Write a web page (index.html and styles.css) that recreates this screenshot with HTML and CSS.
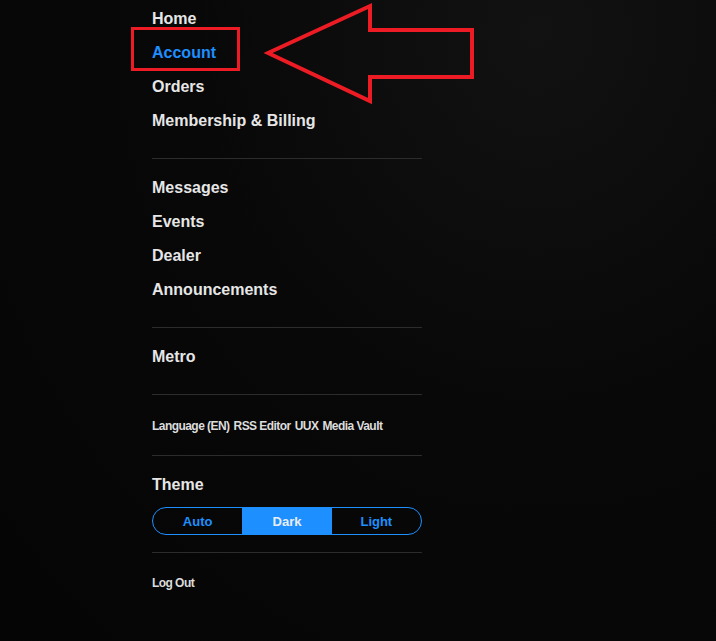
FILE: index.html
```html
<!DOCTYPE html>
<html lang="en">
<head>
    <meta charset="UTF-8">
    <meta name="viewport" content="width=device-width, initial-scale=1.0">
    <title>Account Menu</title>
    <link rel="stylesheet" href="styles.css">
</head>
<body>

    <nav class="menu">

        <div class="section first">
            <a class="item" href="#">Home</a>
            <a class="item active" href="#">Account</a>
            <a class="item" href="#">Orders</a>
            <a class="item" href="#">Membership &amp; Billing</a>
        </div>

        <div class="section">
            <a class="item" href="#">Messages</a>
            <a class="item" href="#">Events</a>
            <a class="item" href="#">Dealer</a>
            <a class="item" href="#">Announcements</a>
        </div>

        <div class="section">
            <a class="item" href="#">Metro</a>
        </div>

        <div class="section links">
            <a href="#">Language (EN)</a>
            <a href="#">RSS Editor</a>
            <a href="#">UUX</a>
            <a href="#">Media Vault</a>
        </div>

        <div class="section theme">
            <div class="item title">Theme</div>
            <div class="toggle">
                <button>Auto</button>
                <button class="on">Dark</button>
                <button>Light</button>
            </div>
        </div>

        <div class="section logout">
            <a href="#">Log Out</a>
        </div>

    </nav>

    <!-- annotation on top of the screenshot -->
    <div class="mark-box"></div>
    <svg class="mark-arrow" width="216" height="108" viewBox="0 0 216 108">
        <polygon points="4,51 106,4 106,28 208,28 208,75 106,75 106,99"
            fill="none" stroke="#ed1c24" stroke-width="4" stroke-linejoin="miter" />
    </svg>

</body>
</html>
```

FILE: styles.css
```css
body {
    margin: 0;
    height: 641px;
    overflow: hidden;
    background: radial-gradient(ellipse at 75% 5%, #121212 0%, #080808 45%, #050505 100%);
    color: #e6e6e6;
    font-family: "Liberation Sans", Arial, sans-serif;
}

.menu {
    width: 270px;
    margin-left: 152px;
    padding-top: 1px;
}

.section {
    display: flex;
    flex-direction: column;
    border-top: 1px solid #2c2c2c;
    padding: 11px 0 21px;
}

.section.first {
    border-top: none;
    padding-top: 0;
}

.item {
    display: block;
    height: 33px;
    padding-top: 1px;
    line-height: 34px;
    font-size: 16px;
    font-weight: bold;
    color: #e6e6e6;
    text-decoration: none;
}

.item.active {
    color: #1e8fff;
}

.links {
    flex-direction: row;
    gap: 4px;
    padding: 24px 0 22px;
}

.links a,
.logout a {
    font-size: 12px;
    line-height: 14px;
    font-weight: bold;
    letter-spacing: -0.55px;
    color: #dcdcdc;
    text-decoration: none;
}

.theme {
    padding-bottom: 17px;
}

.toggle {
    display: flex;
    height: 28px;
    margin-top: 6px;
    border: 1px solid #1e8fff;
    border-radius: 15px;
    overflow: hidden;
    box-sizing: border-box;
}

.toggle button {
    flex: 1;
    border: none;
    background: transparent;
    color: #1e8fff;
    font-family: "Liberation Sans", Arial, sans-serif;
    font-size: 13px;
    font-weight: bold;
    cursor: pointer;
}

.toggle button.on {
    background: #1e8fff;
    color: #e8eef5;
}

.logout {
    padding: 23px 0 21px;
}

.mark-box {
    position: absolute;
    left: 131px;
    top: 27px;
    width: 109px;
    height: 44px;
    border: 3px solid #ed1c24;
    box-sizing: border-box;
}

.mark-arrow {
    position: absolute;
    left: 264px;
    top: 2px;
}
```
